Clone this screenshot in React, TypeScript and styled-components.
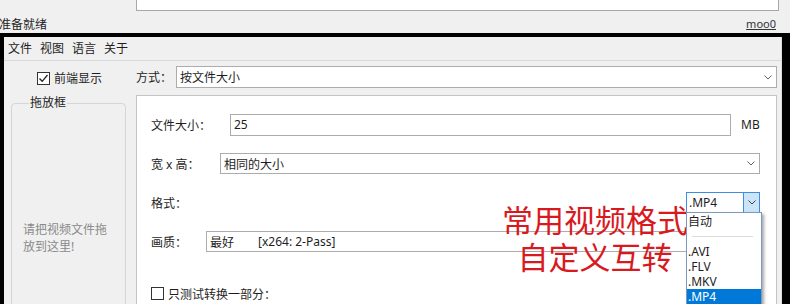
import React from "react";
import styled, { createGlobalStyle } from "styled-components";

const Global = createGlobalStyle`
  html, body { margin: 0; padding: 0; background: #f0f0f0; }
  body {
    font-family: "Noto Sans", "Noto Sans CJK SC", sans-serif;
    font-size: 12px;
    color: #1e1e1e;
  }
  #root { width: 790px; height: 304px; overflow: hidden; }
`;

const Root = styled.div`
  width: 790px;
  height: 304px;
  display: flex;
  flex-direction: column;
  overflow: hidden;
`;

const TopArea = styled.div`
  height: 33px;
  background: #f0f0f0;
  display: flex;
  flex-direction: column;
  flex: none;
`;

const OutputBox = styled.div`
  margin-left: 136px;
  width: 643px;
  height: 11px;
  box-sizing: border-box;
  background: #fff;
  border: 1px solid #a8a8a8;
  border-top: none;
`;

const StatusBar = styled.div`
  flex: 1;
  display: flex;
  align-items: center;
  justify-content: space-between;
  padding: 3px 14px 0 0;
  margin-left: -1px;
`;

const Credit = styled.span`
  text-decoration: underline;
  color: #333;
  font-family: "Noto Sans", sans-serif;
  font-size: 11px;
`;

const Band = styled.div`
  height: 4px;
  background: #000;
  flex: none;
`;

const Lower = styled.div`
  flex: 1;
  display: flex;
  min-height: 0;
`;

const Edge = styled.div<{ $w: number }>`
  width: ${(p) => p.$w}px;
  background: #000;
  flex: none;
`;

const Window = styled.div`
  flex: 1;
  background: #f0f0f0;
  border-right: 1px solid #dcdcdc;
  display: flex;
  flex-direction: column;
  min-width: 0;
`;

const MenuBar = styled.div`
  height: 23px;
  border-bottom: 1px solid #d9d9d9;
  display: flex;
  align-items: center;
  gap: 8px;
  padding-left: 4px;
  flex: none;
`;

const MenuItem = styled.span`
  line-height: 14px;
`;

const Content = styled.div`
  display: grid;
  grid-template-columns: 132px 641px;
  grid-template-rows: 34px 1fr;
  flex: 1;
  min-height: 0;
`;

const TopLeft = styled.label`
  display: flex;
  align-items: flex-start;
  gap: 4px;
  padding: 11px 0 0 33px;
  line-height: 13px;
`;

const Box = styled.span`
  width: 13px;
  height: 13px;
  box-sizing: border-box;
  border: 1px solid #333;
  background: #fff;
  display: inline-flex;
  align-items: center;
  justify-content: center;
  flex: none;
`;

const TopRight = styled.div`
  display: flex;
  align-items: center;
  padding-top: 5px;
  align-self: start;
  height: 22px;
  box-sizing: content-box;
`;

const Label = styled.span<{ $w: number }>`
  width: ${(p) => p.$w}px;
  flex: none;
  white-space: nowrap;
`;

const Field = styled.div<{ $h?: number }>`
  flex: 1;
  height: ${(p) => p.$h ?? 21}px;
  box-sizing: border-box;
  border: 1px solid #acacac;
  background: #fff;
  display: flex;
  align-items: center;
  padding-left: 3px;
  min-width: 0;
`;

const Chevron = styled.svg`
  margin-left: auto;
  margin-right: 4px;
  flex: none;
`;

const DropGroup = styled.fieldset`
  margin: 1px 10px 0 7px;
  padding: 0 0 0 11px;
  border: 1px solid #d6d6d6;
  border-radius: 4px;
  height: 400px;
  min-width: 0;
  & > legend {
    padding: 0 1px;
    margin-left: 6px;
    line-height: 14px;
    color: #1e1e1e;
  }
`;

const DropHint = styled.div`
  padding-top: 111px;
  color: #8a8a8a;
  line-height: 17px;
  white-space: nowrap;
`;

const Panel = styled.div`
  position: relative;
  background: #fff;
  border: 1px solid #c4c4c4;
  padding: 9px 16px 0 14px;
  display: flex;
  flex-direction: column;
  height: 400px;
`;

const Row = styled.div<{ $gapTop?: number }>`
  height: 39px;
  flex: none;
  display: flex;
  align-items: center;
  margin-top: ${(p) => p.$gapTop ?? 0}px;
`;

const Unit = styled.span`
  margin-left: 10px;
  width: 19px;
  font-family: "Noto Sans", sans-serif;
`;

const Spacer = styled.div`
  flex: 1;
`;

const FormatWrap = styled.div`
  position: relative;
  width: 74px;
  height: 21px;
  flex: none;
  z-index: 2;
`;

const FormatCombo = styled.div`
  height: 21px;
  box-sizing: border-box;
  border: 1px solid #3d8ee0;
  background: #fff;
  display: flex;
  align-items: stretch;
`;

const FormatText = styled.span`
  flex: 1;
  padding-left: 2px;
  display: flex;
  align-items: center;
  font-family: "Noto Sans", sans-serif;
`;

const FormatButton = styled.span`
  width: 15px;
  background: #cce4f7;
  border-left: 1px solid #3d8ee0;
  display: flex;
  align-items: center;
  justify-content: center;
`;

const DropList = styled.div`
  position: absolute;
  top: 20px;
  left: 0;
  width: 76px;
  box-sizing: border-box;
  background: #fff;
  border: 1px solid #7d98c0;
  box-shadow: 2px 2px 3px rgba(0, 0, 0, 0.35);
  display: flex;
  flex-direction: column;
  padding-top: 1px;
`;

const DropItem = styled.div<{ $selected?: boolean }>`
  height: 15px;
  line-height: 15px;
  padding-left: 1px;
  font-family: "Noto Sans", "Noto Sans CJK SC", sans-serif;
  background: ${(p) => (p.$selected ? "#0078d7" : "transparent")};
  color: ${(p) => (p.$selected ? "#fff" : "#1e1e1e")};
`;

const DropDivider = styled.div`
  height: 15px;
  display: flex;
  align-items: center;
  padding: 0 8px 0 5px;
  &::after {
    content: "";
    flex: 1;
    border-top: 1px solid #dcdcdc;
  }
`;

const Annotation = styled.div`
  position: absolute;
  left: 355px;
  top: 104px;
  width: 206px;
  text-align: center;
  font-family: "Noto Sans CJK SC", sans-serif;
  font-size: 31px;
  line-height: 37px;
  color: #d81a1f;
  z-index: 1;
  pointer-events: none;
`;

const CheckRow = styled.label`
  display: flex;
  align-items: center;
  gap: 4px;
`;

const Gap = styled.span<{ $w: number }>`
  display: inline-block;
  width: ${(p) => p.$w}px;
`;

const ChevronIcon = () => (
  <Chevron width="8" height="5" viewBox="0 0 8 5">
    <polyline points="0.5,0.5 4,4 7.5,0.5" fill="none" stroke="#606060" strokeWidth="1" />
  </Chevron>
);

const Check = ({ checked }: { checked?: boolean }) => (
  <Box>
    {checked && (
      <svg width="11" height="11" viewBox="0 0 11 11">
        <polyline points="1.5,5.5 4.2,8.3 9.5,2" fill="none" stroke="#222" strokeWidth="1.3" />
      </svg>
    )}
  </Box>
);

const menus = ["文件", "视图", "语言", "关于"];

export default function App() {
  return (
    <Root>
      <Global />
      <TopArea>
        <OutputBox />
        <StatusBar>
          <span>准备就绪</span>
          <Credit>moo0</Credit>
        </StatusBar>
      </TopArea>
      <Band />
      <Lower>
        <Edge $w={4} />
        <Window>
          <MenuBar>
            {menus.map((m) => (
              <MenuItem key={m}>{m}</MenuItem>
            ))}
          </MenuBar>
          <Content>
            <TopLeft>
              <Check checked />
              前端显示
            </TopLeft>
            <TopRight>
              <Label $w={40}>方式：</Label>
              <Field $h={22}>
                按文件大小
                <ChevronIcon />
              </Field>
            </TopRight>
            <DropGroup>
              <legend>拖放框</legend>
              <DropHint>
                请把视频文件拖
                <br />
                放到这里!
              </DropHint>
            </DropGroup>
            <Panel>
              <Row>
                <Label $w={79}>文件大小：</Label>
                <Field $h={22}>25</Field>
                <Unit>MB</Unit>
              </Row>
              <Row>
                <Label $w={69}>宽 x 高：</Label>
                <Field>
                  相同的大小
                  <ChevronIcon />
                </Field>
              </Row>
              <Row>
                <Label $w={40}>格式：</Label>
                <Spacer />
                <FormatWrap>
                  <FormatCombo>
                    <FormatText>.MP4</FormatText>
                    <FormatButton>
                      <svg width="8" height="5" viewBox="0 0 8 5">
                        <polyline points="0.5,0.5 4,4 7.5,0.5" fill="none" stroke="#404040" strokeWidth="1" />
                      </svg>
                    </FormatButton>
                  </FormatCombo>
                  <DropList>
                    <DropItem>自动</DropItem>
                    <DropDivider />
                    <DropItem>.AVI</DropItem>
                    <DropItem>.FLV</DropItem>
                    <DropItem>.MKV</DropItem>
                    <DropItem $selected>.MP4</DropItem>
                  </DropList>
                </FormatWrap>
              </Row>
              <Row>
                <Label $w={55}>画质：</Label>
                <Field>
                  最好
                  <Gap $w={24} />
                  [x264: 2-Pass]
                  <ChevronIcon />
                </Field>
              </Row>
              <Row $gapTop={13}>
                <CheckRow>
                  <Check />
                  只测试转换一部分：
                </CheckRow>
              </Row>
              <Annotation>
                常用视频格式
                <br />
                自定义互转
              </Annotation>
            </Panel>
          </Content>
        </Window>
        <Edge $w={8} />
      </Lower>
    </Root>
  );
}
